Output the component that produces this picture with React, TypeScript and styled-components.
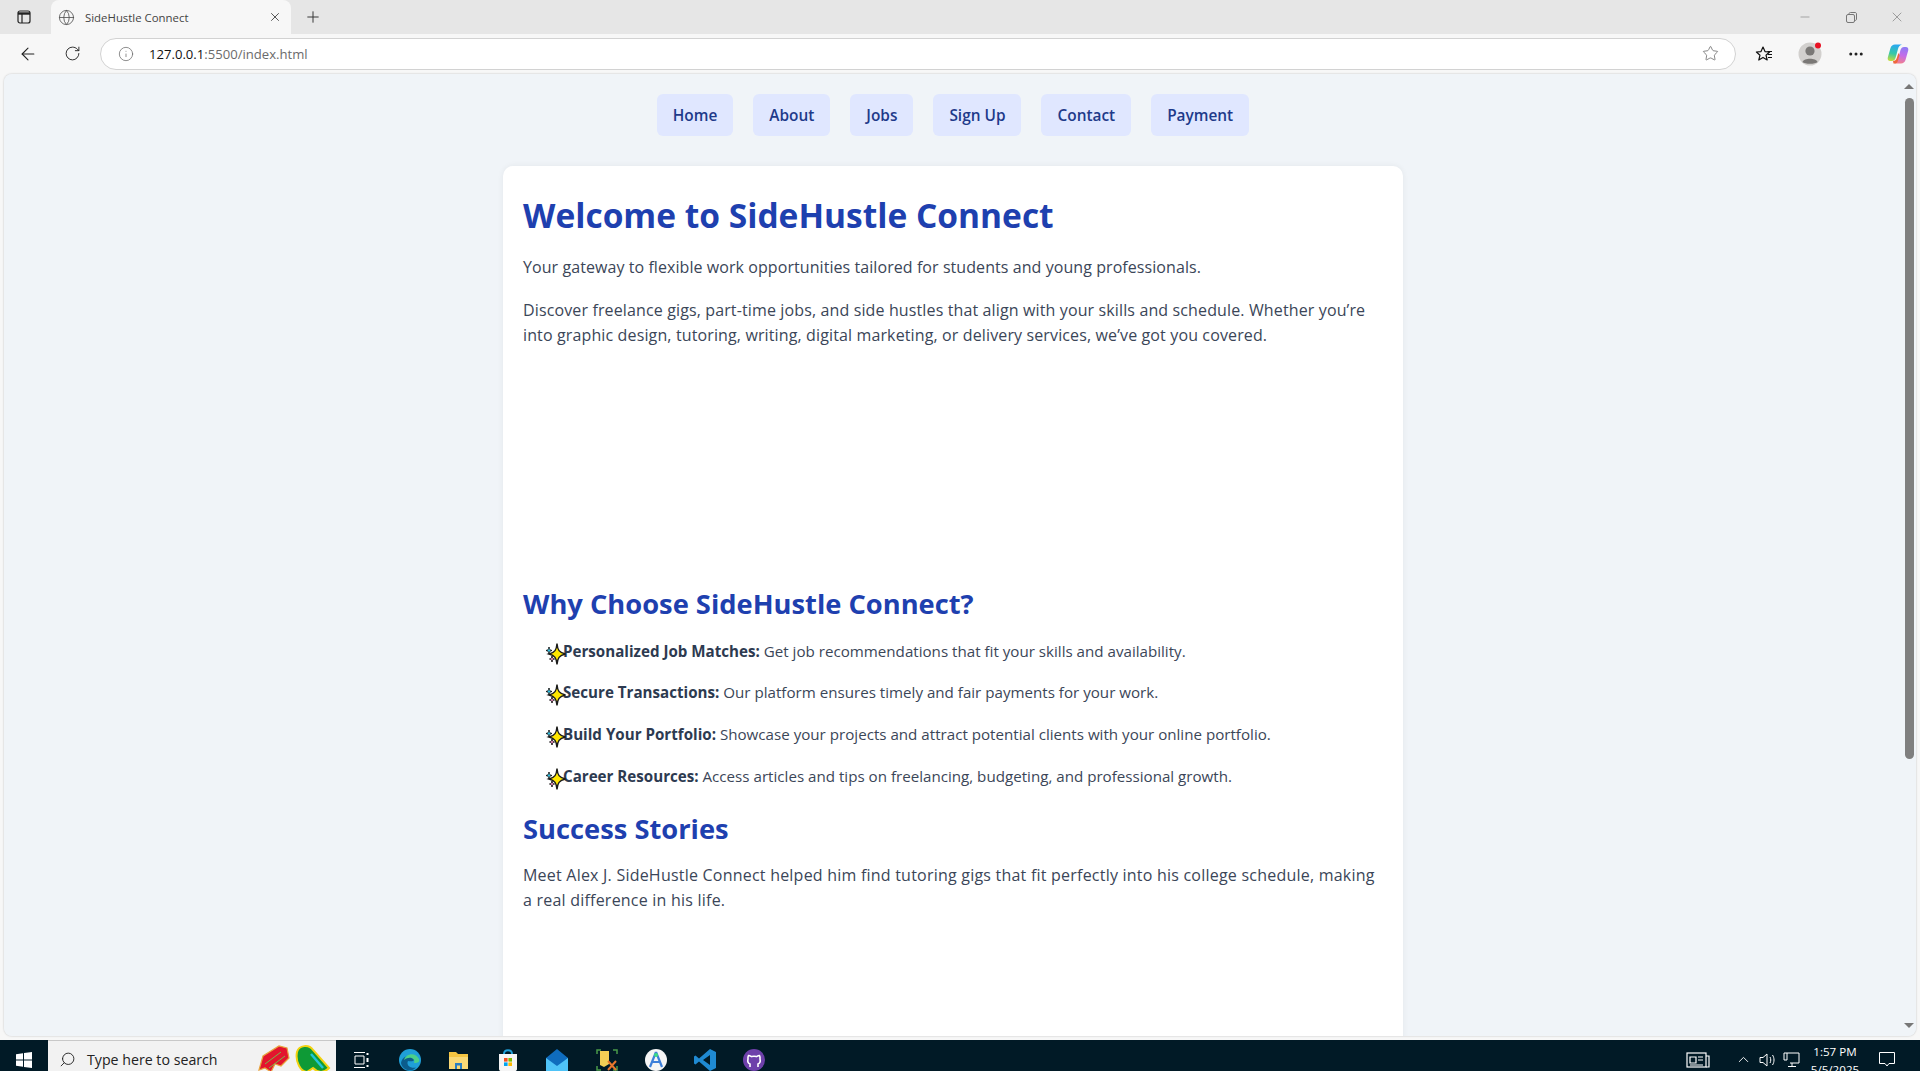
import React from 'react';
import styled, { createGlobalStyle } from 'styled-components';
import { ArrowLeft, RotateCw, Info, Star, Globe, X, Plus, Minus, MoreHorizontal, Search, ChevronUp } from 'lucide-react';

const GlobalStyle = createGlobalStyle`
    * { box-sizing: border-box; }
    html, body { margin: 0; height: 100%; overflow: hidden; }
    body { font-family: "Open Sans", "Noto Sans", sans-serif; background: #f7f7f7; }
`
const Screen = styled.div`
    height: 1071px;
    display: flex;
    flex-direction: column;
    overflow: hidden;
`
const TabBar = styled.div`
    height: 34px;
    background: #e6e6e6;
    display: flex;
    align-items: flex-end;
    flex-shrink: 0;
`
const SideBtn = styled.div`
    width: 51px;
    height: 34px;
    display: flex;
    align-items: center;
    justify-content: center;
    padding-right: 3px;
`
const Tab = styled.div`
    width: 240px;
    height: 34px;
    background: #f7f7f7;
    border-radius: 8px 8px 0 0;
    display: flex;
    align-items: center;
    padding: 0 9px 0 7px;
    gap: 10px;
    color: #444;
    font-size: 11.4px;
`
const TabTitle = styled.span`
    flex: 1;
`
const NewTab = styled.div`
    width: 44px;
    height: 34px;
    display: flex;
    align-items: center;
    justify-content: center;
    color: #333;
`
const WindowBtns = styled.div`
    margin-left: auto;
    display: flex;
    height: 34px;
    align-items: center;
`
const WindowBtn = styled.div`
    width: 46px;
    height: 34px;
    display: flex;
    align-items: center;
    justify-content: center;
    color: #777;
`
const Toolbar = styled.div`
    height: 40px;
    background: #f7f7f7;
    display: flex;
    align-items: center;
    flex-shrink: 0;
    padding-bottom: 1px;
`
const ToolBtn = styled.div<{ $w?: number }>`
    width: ${p => p.$w || 46}px;
    height: 32px;
    display: flex;
    align-items: center;
    justify-content: center;
    color: #222;
    flex-shrink: 0;
`
const UrlBar = styled.div`
    width: 1636px;
    height: 32px;
    margin: 0 5px 0 12px;
    background: #fff;
    border: 1px solid #d2d2d2;
    border-radius: 16px;
    display: flex;
    align-items: center;
    padding: 0 16px 0 17px;
    flex-shrink: 0;
    color: #666;
`
const UrlText = styled.span`
    margin-left: 15px;
    padding-top: 1px;
    flex: 1;
    font-size: 13.1px;
    color: #6b6b6b;
    b { font-weight: 400; color: #111; }
`
const Viewport = styled.div`
    flex: 1;
    min-height: 0;
    display: flex;
    padding: 0 4px 4px;
`
const Frame = styled.div`
    flex: 1;
    display: flex;
    min-width: 0;
    border-radius: 8px;
    overflow: hidden;
    box-shadow: 0 0 2px rgba(0, 0, 0, 0.25);
    background: #f0f4f8;
`
const Page = styled.div`
    flex: 1;
    min-width: 0;
    overflow: hidden;
    background: #f0f4f8;
    color: #3b4658;
`
const Nav = styled.nav`
    display: flex;
    justify-content: center;
    gap: 20px;
    padding: 20px 0 30px;
`
const NavLink = styled.a`
    height: 42px;
    padding: 0 16px;
    display: flex;
    align-items: center;
    background: #e0e7ff;
    border-radius: 6px;
    color: #1e3a8a;
    font-size: 15.4px;
    font-weight: 600;
`
const Card = styled.main`
    width: 900px;
    margin: 0 auto;
    padding: 24px 20px 20px;
    background: #fff;
    border-radius: 10px;
    box-shadow: 0 0 6px rgba(0, 0, 0, 0.06);
    height: 1200px;
`
const Title = styled.h1`
    margin: 0 0 15px;
    font-size: 33.5px;
    line-height: 50px;
    font-weight: 700;
    color: #1e40af;
`
const Heading = styled.h2`
    margin: 0 0 14px;
    font-size: 27.3px;
    line-height: 40px;
    font-weight: 700;
    color: #1e40af;
`
const Text = styled.p<{ $track: number }>`
    margin: 0 0 17px;
    font-size: 16px;
    line-height: 25.6px;
    letter-spacing: ${p => p.$track}px;
`
const Blank = styled.div`
    height: 218px;
`
const List = styled.ul`
    list-style: none;
    margin: 0 0 20px;
    padding: 0 0 0 22px;
`
const Item = styled.li`
    display: flex;
    align-items: center;
    height: 25.6px;
    margin-bottom: 16.2px;
    font-size: 15.15px;
    white-space: pre;
    strong { font-weight: 700; color: #2d3a50; }
`
const SparkBox = styled.span`
    width: 18px;
    height: 22px;
    flex-shrink: 0;
    position: relative;
`
const SparkIcon = styled.svg`
    position: absolute;
    left: -1px;
    top: 3px;
`
const Scrollbar = styled.div`
    width: 14px;
    flex-shrink: 0;
    background: #f0f4f8;
    display: flex;
    flex-direction: column;
    align-items: center;
    padding-top: 10px;
`
const Arrow = styled.div<{ $down?: boolean }>`
    width: 0;
    height: 0;
    border-left: 5px solid transparent;
    border-right: 5px solid transparent;
    ${p => (p.$down ? 'border-top: 5px solid #777;' : 'border-bottom: 5px solid #777;')}
`
const Thumb = styled.div`
    width: 9px;
    height: 661px;
    background: #7f7f7f;
    border-radius: 4.5px;
    margin: 9px 0 auto;
`
const ArrowSlot = styled.div`
    margin-bottom: 8px;
`
const Taskbar = styled.div`
    height: 31px;
    flex-shrink: 0;
    background: #011a26;
    display: flex;
    align-items: flex-start;
    color: #fff;
    overflow: hidden;
`
const StartBtn = styled.div`
    width: 48px;
    height: 31px;
    display: flex;
    align-items: center;
    justify-content: center;
    padding-top: 9px;
`
const SearchBox = styled.div`
    width: 288px;
    height: 31px;
    background: #f2f2f2;
    border-top: 1px solid #c8c8c8;
    display: flex;
    align-items: center;
    padding: 6px 3px 0 11px;
    color: #222;
    font-size: 14.2px;
    gap: 11px;
`
const SearchLabel = styled.span`
    flex: 1;
    padding-top: 1px;
`
const Doodle = styled.svg`
    flex-shrink: 0;
`
const Apps = styled.div`
    display: flex;
`
const AppSlot = styled.div`
    width: 49.2px;
    height: 31px;
    display: flex;
    align-items: center;
    justify-content: center;
    padding-top: 9px;
`
const Tray = styled.div`
    margin-left: auto;
    display: flex;
    align-items: center;
    height: 31px;
    padding-right: 13px;
`
const TraySlot = styled.div<{ $w: number }>`
    width: ${p => p.$w}px;
    height: 31px;
    display: flex;
    justify-content: center;
    align-items: center;
    padding-top: 8px;
`
const Clock = styled.div`
    width: 64px;
    font-size: 11.6px;
    line-height: 18px;
    text-align: center;
    align-self: flex-start;
    padding-top: 3px;
    white-space: nowrap;
`

const links = ['Home', 'About', 'Jobs', 'Sign Up', 'Contact', 'Payment'];
const perks = [
    ['Personalized Job Matches:', ' Get job recommendations that fit your skills and availability.'],
    ['Secure Transactions:', ' Our platform ensures timely and fair payments for your work.'],
    ['Build Your Portfolio:', ' Showcase your projects and attract potential clients with your online portfolio.'],
    ['Career Resources:', ' Access articles and tips on freelancing, budgeting, and professional growth.'],
];

const Sparkles = () => (
    <SparkIcon width="24" height="24" viewBox="0 0 24 24">
        <path d="M13 0.5 C13.6 7 15 9.4 21.5 11 C15 12.6 13.6 15 13 21.5 C12.4 15 11 12.6 5 11 C11 9.4 12.4 7 13 0.5Z" fill="#ffe600" stroke="#1a1a1a" strokeWidth="1.4" />
        <path d="M5 4 C5.3 6.4 5.8 7 8 7.5 C5.8 8 5.3 8.6 5 11 C4.7 8.6 4.2 8 2 7.5 C4.2 7 4.7 6.4 5 4Z" fill="#2fc4e8" stroke="#1a1a1a" strokeWidth="1" />
        <path d="M8 13 C8.3 15 8.8 15.6 10.5 16 C8.8 16.4 8.3 17 8 19 C7.7 17 7.2 16.4 5.5 16 C7.2 15.6 7.7 15 8 13Z" fill="#f08cc0" stroke="#1a1a1a" strokeWidth="1" />
    </SparkIcon>
);

const Copilot = () => (
    <svg width="22" height="22" viewBox="0 0 22 22">
        <defs>
            <linearGradient id="cpA" x1="0.5" y1="0" x2="0.3" y2="1">
                <stop offset="0" stopColor="#2aa8f2" />
                <stop offset="0.55" stopColor="#35c8a8" />
                <stop offset="1" stopColor="#c4dc3e" />
            </linearGradient>
            <linearGradient id="cpB" x1="0.6" y1="0" x2="0.4" y2="1">
                <stop offset="0" stopColor="#8f7bf5" />
                <stop offset="0.5" stopColor="#c56ce8" />
                <stop offset="1" stopColor="#f27f8c" />
            </linearGradient>
        </defs>
        <path d="M8 1.5 H15 C12.5 2 11.5 4 11 6 L8.5 15 C8 17 6.5 18 5 18 H3.2 C1.2 18 0.3 16.5 0.8 14.5 L3.5 5 C4.2 2.8 5.8 1.5 8 1.5Z" fill="url(#cpA)" />
        <path d="M14 20.5 H7 C9.5 20 10.5 18 11 16 L13.5 7 C14 5 15.5 4 17 4 H18.8 C20.8 4 21.7 5.5 21.2 7.5 L18.5 17 C17.8 19.2 16.2 20.5 14 20.5Z" fill="url(#cpB)" />
        <path d="M6 18 C8 18 9.2 17 9.8 15 L11.4 10 L12.6 12 L11 17.5 C10.5 19.5 9.5 20.5 8 20.5 H6.5 Z" fill="#f0663c" />
    </svg>
);

const Profile = () => (
    <svg width="24" height="24" viewBox="0 0 24 24">
        <circle cx="12" cy="12" r="11.5" fill="#d2d0ce" />
        <circle cx="12" cy="9" r="4.6" fill="#7a7876" />
        <path d="M4.5 20 C6 15.8 18 15.8 19.5 20 C17.5 22.4 6.5 22.4 4.5 20Z" fill="#7a7876" />
        <circle cx="20" cy="3.5" r="3" fill="#e81123" />
    </svg>
);

const Favorites = () => (
    <svg width="18" height="18" viewBox="0 0 18 18" fill="none" stroke="#111" strokeWidth="1.2">
        <path d="M8 2 L10 6.6 L14.6 7 L11 10.2 L12.2 15 L8 12.4 L3.8 15 L5 10.2 L1.4 7 L6 6.6Z" strokeLinejoin="round" />
        <path d="M12.5 6.5 H17 M13 9.5 H17 M13 12.5 H17" />
    </svg>
);

const WindowsLogo = () => (
    <svg width="16" height="16" viewBox="0 0 16 16" fill="#fff">
        <path d="M0 2.3 L7 1.2 V7.5 H0Z M8 1 L16 0 V7.5 H8Z M0 8.5 H7 V14.8 L0 13.7Z M8 8.5 H16 V16 L8 15Z" />
    </svg>
);

const Appicons = [
    <svg key="tv" width="18" height="18" viewBox="0 0 18 18" fill="none" stroke="#fff" strokeWidth="1"><path d="M2 1.5 H13 M2 16.5 H13 M3 5 H12 V13 H3Z" /><path d="M15.5 2 V4 M15.5 7 V11 M15.5 14 V16" strokeWidth="2" /></svg>,
    <svg key="edge" width="24" height="24" viewBox="0 0 24 24"><circle cx="12" cy="12" r="11" fill="#1f9fd8" /><path d="M3 15 C4 8 12 6 16 10 C18 12.5 14 14 10 13 C8 17 12 21 18 19.5 C13 25 4 22 3 15Z" fill="#0b5c8c" /><path d="M6 12 C8 5 18 4 21 11 C22 14 20 15 16 15 C18 11 12 7 6 12Z" fill="#4ad08a" /></svg>,
    <svg key="files" width="24" height="24" viewBox="0 0 24 24"><path d="M2 4 H9 L11 6 H21 V21 H2Z" fill="#f4c542" /><path d="M2 9 H21 V21 H2Z" fill="#f9d976" /><path d="M8 15 H15 V21 H13 V17.5 H10 V21 H8Z" fill="#2a7fc1" /></svg>,
    <svg key="store" width="24" height="24" viewBox="0 0 24 24"><path d="M8 6 C8 1 16 1 16 6" fill="none" stroke="#1f9fd8" strokeWidth="2" /><path d="M3 6 H21 V21 C21 22.5 20 23 19 23 H5 C4 23 3 22.5 3 21Z" fill="#f5f5f5" /><path d="M8 10 H11.6 V13.6 H8Z" fill="#f25022" /><path d="M12.4 10 H16 V13.6 H12.4Z" fill="#7fba00" /><path d="M8 14.4 H11.6 V18 H8Z" fill="#00a4ef" /><path d="M12.4 14.4 H16 V18 H12.4Z" fill="#ffb900" /></svg>,
    <svg key="mail" width="24" height="24" viewBox="0 0 24 24"><path d="M12 1 L23 10 V23 H1 V10Z" fill="#0f6cbd" /><path d="M1 10 L12 18 L23 10 V23 H1Z" fill="#4fc3f7" /></svg>,
    <svg key="tool" width="24" height="24" viewBox="0 0 24 24" fill="none"><path d="M2 6 V2 H6 M18 2 H22 V6 M2 18 V22 H6 M18 22 H22 V18" stroke="#4a9a4a" strokeWidth="1.5" /><path d="M5 3 H14 V16 L9 19 L5 17Z" fill="#f3cf55" /><path d="M13 13 L21 22 M21 13 L13 22" stroke="#e8762c" strokeWidth="2" /></svg>,
    <svg key="studio" width="24" height="24" viewBox="0 0 24 24"><circle cx="12" cy="12" r="11" fill="#f5f5f5" /><path d="M12 4 L6 19 M12 4 L18 19 M8.5 14 H15.5" stroke="#3d7fd9" strokeWidth="2.2" fill="none" /><circle cx="12" cy="7" r="2" fill="#3ddc84" /></svg>,
    <svg key="code" width="24" height="24" viewBox="0 0 24 24"><path d="M17 1 L23 4 V20 L17 23 L6 13.5 L2.5 16.5 L1 15.5 V8.5 L2.5 7.5 L6 10.5Z M17 7 L10 12 L17 17Z" fill="#1f8ad2" fillRule="evenodd" /></svg>,
    <svg key="gh" width="24" height="24" viewBox="0 0 24 24"><circle cx="12" cy="12" r="11" fill="#6e40aa" /><path d="M8 19 V16 C5.5 15 5.5 13 6 11 C5.8 9.5 6 8.5 6.5 7.5 C7.5 7.5 8.5 8 9.5 8.6 C11 8.2 13 8.2 14.5 8.6 C15.5 8 16.5 7.5 17.5 7.5 C18 8.5 18.2 9.5 18 11 C18.5 13 18.5 15 16 16 V19" fill="none" stroke="#fff" strokeWidth="1.6" /></svg>,
];

const App = () => {
    return (
        <Screen>
            <GlobalStyle />
            <TabBar>
                <SideBtn>
                    <svg width="14" height="14" viewBox="0 0 14 14" fill="none" stroke="#222" strokeWidth="1.2">
                        <rect x="1" y="1" width="12" height="12" rx="2" />
                        <path d="M1 3.5 H13" strokeWidth="2.4" />
                        <path d="M5 4 V13" />
                    </svg>
                </SideBtn>
                <Tab>
                    <Globe size={17} strokeWidth={1.2} color="#555" />
                    <TabTitle>SideHustle Connect</TabTitle>
                    <X size={14} strokeWidth={1.4} color="#333" />
                </Tab>
                <NewTab><Plus size={18} strokeWidth={1.3} /></NewTab>
                <WindowBtns>
                    <WindowBtn><Minus size={14} strokeWidth={1} /></WindowBtn>
                    <WindowBtn>
                        <svg width="11" height="11" viewBox="0 0 11 11" fill="none" stroke="#777">
                            <rect x="0.5" y="2.5" width="8" height="8" rx="1.5" />
                            <path d="M3 2.5 V2 C3 1 3.5 0.5 4.5 0.5 H9 C10 0.5 10.5 1 10.5 2 V7 C10.5 8 10 8.5 8.5 8.5" />
                        </svg>
                    </WindowBtn>
                    <WindowBtn><X size={16} strokeWidth={1} /></WindowBtn>
                </WindowBtns>
            </TabBar>
            <Toolbar>
                <ToolBtn $w={56}><ArrowLeft size={20} strokeWidth={1.3} /></ToolBtn>
                <ToolBtn $w={32}><RotateCw size={17} strokeWidth={1.3} /></ToolBtn>
                <UrlBar>
                    <Info size={16} strokeWidth={1.1} />
                    <UrlText><b>127.0.0.1</b>:5500/index.html</UrlText>
                    <Star size={17} strokeWidth={1.1} />
                </UrlBar>
                <ToolBtn><Favorites /></ToolBtn>
                <ToolBtn><Profile /></ToolBtn>
                <ToolBtn><MoreHorizontal size={18} strokeWidth={2} /></ToolBtn>
                <ToolBtn $w={38}><Copilot /></ToolBtn>
            </Toolbar>
            <Viewport>
                <Frame>
                    <Page>
                        <Nav>
                            {links.map(l => <NavLink key={l}>{l}</NavLink>)}
                        </Nav>
                        <Card>
                            <Title>Welcome to SideHustle Connect</Title>
                            <Text $track={0.07}>Your gateway to flexible work opportunities tailored for students and young professionals.</Text>
                            <Text $track={0.13}>Discover freelance gigs, part-time jobs, and side hustles that align with your skills and schedule. Whether you’re into graphic design, tutoring, writing, digital marketing, or delivery services, we’ve got you covered.</Text>
                            <Blank />
                            <Heading>Why Choose SideHustle Connect?</Heading>
                            <List>
                                {perks.map(([head, rest]) => (
                                    <Item key={head}>
                                        <SparkBox><Sparkles /></SparkBox>
                                        <strong>{head}</strong>{rest}
                                    </Item>
                                ))}
                            </List>
                            <Heading>Success Stories</Heading>
                            <Text $track={0.22}>Meet Alex J. SideHustle Connect helped him find tutoring gigs that fit perfectly into his college schedule, making a real difference in his life.</Text>
                        </Card>
                    </Page>
                    <Scrollbar>
                        <Arrow />
                        <Thumb />
                        <ArrowSlot><Arrow $down /></ArrowSlot>
                    </Scrollbar>
                </Frame>
            </Viewport>
            <Taskbar>
                <StartBtn><WindowsLogo /></StartBtn>
                <SearchBox>
                    <Search size={17} strokeWidth={1.3} style={{ transform: 'scaleX(-1)' }} />
                    <SearchLabel>Type here to search</SearchLabel>
                    <Doodle width="76" height="30" viewBox="0 0 76 30">
                        <path d="M2 26 L6 12 L22 2 L30 4 L32 14 L24 22 L18 20 L14 28 L8 24Z" fill="#e3142d" stroke="#e8a33d" strokeWidth="1.2" />
                        <path d="M8 20 L24 8 M12 24 L28 12" stroke="#7ab648" strokeWidth="1" fill="none" />
                        <path d="M40 8 C42 1 52 0 56 6 L72 24 C66 30 60 28 56 24 L50 28 C44 28 38 18 40 8Z" fill="#0e9a36" stroke="#f2d20f" strokeWidth="2" />
                        <path d="M54 10 L66 24" stroke="#22c5d8" strokeWidth="2.5" />
                    </Doodle>
                </SearchBox>
                <Apps>
                    {Appicons.map((icon, i) => <AppSlot key={i}>{icon}</AppSlot>)}
                </Apps>
                <Tray>
                    <TraySlot $w={66}>
                        <svg width="24" height="18" viewBox="0 0 24 18" fill="none" stroke="#fff" strokeWidth="1.2">
                            <rect x="1" y="2" width="19" height="14" />
                            <path d="M20 5 H23 V16 H20 M4 6 H10 V12 H4Z M12 6 H17 M12 9 H17 M4 14 H17" />
                        </svg>
                    </TraySlot>
                    <TraySlot $w={24}><ChevronUp size={17} strokeWidth={1.3} /></TraySlot>
                    <TraySlot $w={24}>
                        <svg width="17" height="16" viewBox="0 0 17 16" fill="none" stroke="#fff" strokeWidth="1">
                            <path d="M1 5.5 H4 L8 2 V14 L4 10.5 H1Z M11 5 C12 7 12 9 11 11 M13.5 3 C15.5 6 15.5 10 13.5 13" />
                        </svg>
                    </TraySlot>
                    <TraySlot $w={24}>
                        <svg width="17" height="16" viewBox="0 0 17 16" fill="none" stroke="#fff" strokeWidth="1">
                            <path d="M1 1 H16 V11 H7 M4 1 V8 H1 V1 M9 11 V14 M5 14.5 H13" />
                        </svg>
                    </TraySlot>
                    <Clock>1:57 PM<br />5/5/2025</Clock>
                    <TraySlot $w={40}>
                        <svg width="16" height="15" viewBox="0 0 16 15" fill="none" stroke="#fff" strokeWidth="1">
                            <path d="M0.5 0.5 H15.5 V11.5 H10 L8 14 L6 11.5 H0.5Z" />
                        </svg>
                    </TraySlot>
                </Tray>
            </Taskbar>
        </Screen>
    )
}

export default App;
